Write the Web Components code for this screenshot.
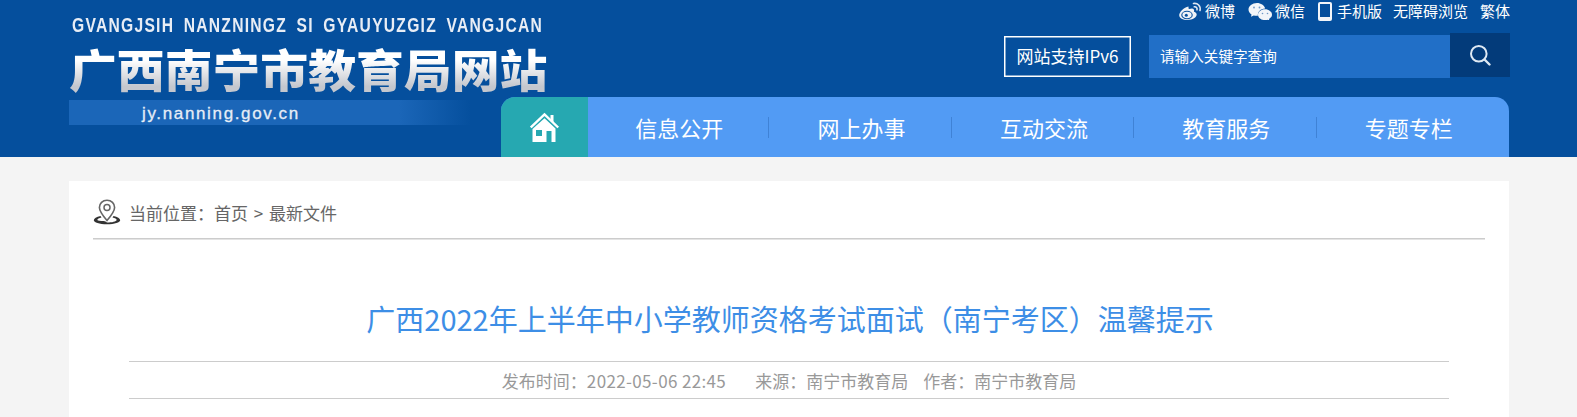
<!DOCTYPE html>
<html lang="zh"><head><meta charset="utf-8"><title>广西南宁市教育局网站</title>
<style>
html,body{margin:0;padding:0;height:417px;overflow:hidden;background:#f4f4f4;font-family:"Noto Sans CJK SC","Liberation Sans",sans-serif}
</style></head><body>
<site-header>
  <site-logo slot="logo"></site-logo>
  <top-links slot="links"></top-links>
  <search-row slot="search"></search-row>
  <main-nav slot="nav"></main-nav>
</site-header>
<article-card>
  <bread-crumb slot="crumb"></bread-crumb>
  <article-head slot="head"></article-head>
</article-card>
<script>
function def(name,html){customElements.define(name,class extends HTMLElement{constructor(){super();this.attachShadow({mode:'open'}).innerHTML=html;}});}
def('site-header',`<style>
:host{display:block;height:157px;background:#054f9d;color:#fff}
.w{width:1441px;margin-left:69px;height:157px;display:flex;justify-content:space-between}
.r{display:flex;flex-direction:column;align-items:flex-start;width:1009px}
</style><div class="w"><slot name="logo"></slot><div class="r"><slot name="links"></slot><slot name="search"></slot><slot name="nav"></slot></div></div>`);
def('site-logo',`<style>
:host{display:block;width:432px;height:157px}
.py{font:700 20px/24px "Liberation Sans",sans-serif;letter-spacing:1.6px;word-spacing:5px;color:#e8edf5;white-space:nowrap;margin:13px 0 0 3px;height:24px;transform:scaleX(.782);transform-origin:0 50%}
.cn{font:900 45px/58px "Noto Sans CJK SC",sans-serif;white-space:nowrap;background:linear-gradient(#fff 35%,#c4c7ce 80%);-webkit-background-clip:text;background-clip:text;color:transparent;width:452px;margin-top:3px;height:58px;transform:scaleX(1.063);transform-origin:0 50%}
.url{margin-top:2px;height:25px;width:402px;background:linear-gradient(90deg,#1b66b8 0,#1b66b8 82%,#054f9d 100%);font:400 17px/27px "Liberation Sans",sans-serif;-webkit-text-stroke:.3px #e6edf6;letter-spacing:1.65px;color:#e6edf6;padding-left:73px;box-sizing:border-box;white-space:nowrap}
</style><div class="py">GVANGJSIH NANZNINGZ SI GYAUYUZGIZ VANGJCAN</div><div class="cn">广西南宁市教育局网站</div><div class="url">jy.nanning.gov.cn</div>`);
def('top-links',`<style>
:host{display:flex;width:1009px;justify-content:flex-end;height:22px;align-items:center;font-size:15px;line-height:22px;color:#fff;white-space:nowrap}
a{display:flex;align-items:center}
svg{display:block}
</style>
<a style="margin-right:13px"><svg width="23" height="18" viewBox="0 0 23 18" style="margin-right:3px"><path fill="#eef2f7" d="M9.500 4.500C5 5.500.2 10 .2 13.200c0 2.800 3.800 4.800 8.300 4.800 5.200 0 9.200-2.800 9.200-5.500 0-1.600-1.500-2.500-2.800-2.800.8-2-.2-3.300-2-3.300-.9 0-2 .3-2.800.7-.5-.3-.6-.6-.6-2.600z"/><ellipse cx="8" cy="13" rx="5.200" ry="3.700" fill="none" stroke="#054f9d" stroke-width="1.100"/><circle cx="7.300" cy="13.200" r="1.500" fill="#054f9d"/><path fill="none" stroke="#dfe7f1" stroke-width="1.600" stroke-linecap="round" d="M14.500 1.500c4-.8 7.500 2.600 6.500 7M15.300 4.800c1.900-.3 3.100 1.100 2.700 3"/></svg><span>微博</span></a>
<a style="margin-right:13px"><svg width="25" height="18" viewBox="0 0 25 18" style="margin-right:2px"><path fill="#f2f5f9" d="M9 1C4.300 1 .5 4 .5 7.600c0 2 1.200 3.700 3 4.900L3 14.800l2.700-1.400c1 .3 2 .4 3.300.4h.9C9.400 9.500 12.700 6.700 17.200 6.400 16.200 3.300 12.900 1 9 1z"/><path fill="#f2f5f9" d="M17 7.200c-3.900 0-7 2.500-7 5.500s3.100 5.400 7 5.400c.8 0 1.600-.1 2.300-.4l2.200 1.200-.5-2c1.800-1 3-2.500 3-4.200 0-3-3.100-5.500-7-5.500z"/><circle cx="6" cy="5.500" r=".9" fill="#6f98c6"/><circle cx="11.500" cy="5.500" r=".9" fill="#6f98c6"/><circle cx="14.500" cy="11.500" r=".8" fill="#6f98c6"/><circle cx="19.500" cy="11.500" r=".8" fill="#6f98c6"/></svg><span>微信</span></a>
<a style="margin-right:11px"><svg width="14" height="19" viewBox="0 0 14 19" style="margin-right:5px"><rect width="14" height="19" rx="2" fill="#f2f5f9"/><rect x="2" y="2" width="10" height="13" fill="#054f9d"/></svg><span>手机版</span></a>
<a style="margin-right:12px">无障碍浏览</a><a>繁体</a>`);
def('search-row',`<style>
:host{display:flex;width:1009px;justify-content:flex-end;align-items:flex-start;margin-top:11px;height:64px;color:#fff}
.ip{width:127px;height:41px;box-sizing:border-box;border:1px solid #fff;box-shadow:inset 0 0 0 .5px #fff;margin-top:3px;margin-right:18px;font-size:17px;line-height:38px;text-align:center;white-space:nowrap}
.in{width:301px;height:43px;margin-top:2px;background:#216fc7;font-size:14.6px;line-height:41px;padding-left:11px;box-sizing:border-box}
.b{width:60px;height:44px;background:#033b7a;display:flex;align-items:center;justify-content:center}
</style><div class="ip">网站支持IPv6</div><div class="in">请输入关键字查询</div><div class="b"><svg width="22" height="22" viewBox="0 0 22 22"><circle cx="9.800" cy="9.800" r="7.800" fill="none" stroke="#dfe9f4" stroke-width="2"/><path d="M15.500 15.500L20.500 20.500" stroke="#dfe9f4" stroke-width="2.400" stroke-linecap="round"/></svg></div>`);
def('main-nav',`<style>
:host{display:flex;width:1008px;height:60px;background:#529bf4;border-radius:14px 14px 0 0;overflow:hidden;box-sizing:border-box;color:#fff;font-size:22px}
.h{width:87px;flex:none;background:#26a8b1;display:flex;align-items:center;justify-content:center}
.i{width:182.4px;flex:none;line-height:60px;text-align:center;position:relative;white-space:nowrap}
.i:not(:last-child)::after{content:"";position:absolute;right:1px;top:20px;height:21px;width:1px;background:#3f82d6}
</style><div class="h"><svg width="30" height="30" viewBox="0 0 30 30"><path d="M.8 15.500L14.500 2.500 28.200 15.500" fill="none" stroke="#fff" stroke-width="2.400"/><path d="M20.500 3h3v8l-3-2.800z" fill="#fff"/><path fill="#fff" fill-rule="evenodd" d="M14.500 6.300L25.500 16.500V30H2.500V17zM6 18v6h6v-6zM16.500 19v11h5V19z"/></svg></div><div class="i">信息公开</div><div class="i">网上办事</div><div class="i">互动交流</div><div class="i">教育服务</div><div class="i">专题专栏</div>`);
def('article-card',`<style>
:host{display:block;width:1440px;margin:24px 0 0 69px;height:236px;background:#fff;padding:0 24px;box-sizing:border-box}
</style><slot name="crumb"></slot><slot name="head"></slot>`);
def('bread-crumb',`<style>
:host{display:flex;align-items:center;height:57px;border-bottom:1px solid #ccc;box-shadow:0 1px 0 #e4e4e4;font-size:17px;color:#666;white-space:nowrap}
svg{margin:4px 8px 0 0;display:block}
span{margin-top:5px;word-spacing:2px}
</style><svg width="28" height="26" viewBox="0 0 28 26"><path d="M14 1.200c-4.500 0-7.600 3.300-7.600 7.300 0 3.900 4.600 9.500 7.600 13 3-3.500 7.600-9.100 7.600-13 0-4-3.100-7.300-7.600-7.300z" fill="#fff" stroke="#666" stroke-width="1.600"/><circle cx="14" cy="8.500" r="3" fill="none" stroke="#666" stroke-width="1.500"/><path d="M7.500 17C3.500 18 .8 19.500.8 21.300c0 2.200 5.600 4 13.200 4s13.200-1.800 13.200-4c0-1.800-2.700-3.300-6.700-4.300l-1 1.500c2.500.6 4.200 1.500 4.200 2.500-.5 1.600-4.500 2.500-9.700 2.500-1.200-.5-1.500-1.500-3.500-1.500-3 0-5.700-.2-6.200-1 0-1 1.700-1.900 4.200-2.500z" fill="#333"/></svg><span>当前位置：首页 &gt; 最新文件</span>`);
def('article-head',`<style>
:host{display:block;padding:0 36px}
h1{margin:0;height:123px;box-sizing:border-box;padding:53px 0 0 2px;font-size:29px;line-height:52px;font-weight:400;color:#3d8ee6;text-align:center;white-space:nowrap;border-bottom:1px solid #ccc}
.m{height:37px;line-height:37px;box-sizing:border-box;font-size:17px;color:#999;white-space:nowrap;border-bottom:1px solid #ccc;display:flex;justify-content:center}
.d{letter-spacing:.36px}
.g1{width:29px}.g2{width:15px}
</style><h1>广西2022年上半年中小学教师资格考试面试（南宁考区）温馨提示</h1><div class="m"><span>发布时间：<span class="d">2022-05-06 22:45</span></span><span class="g1"></span><span>来源：南宁市教育局</span><span class="g2"></span><span>作者：南宁市教育局</span></div>`);
</script>
</body></html>
